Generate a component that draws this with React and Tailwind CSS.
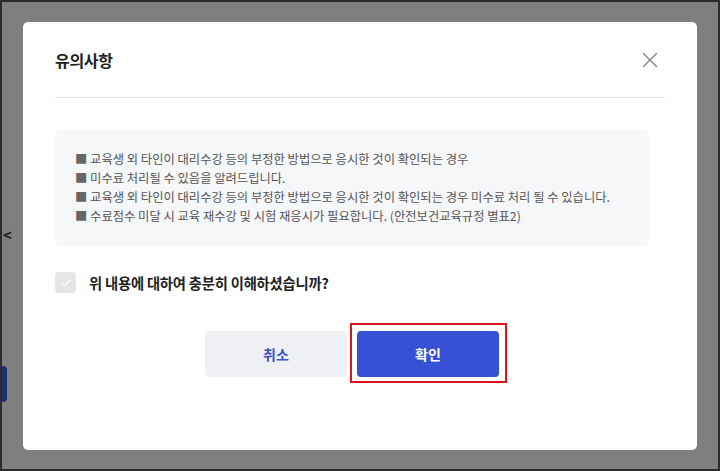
import { X, Check } from 'lucide-react';

const notices = [
    '교육생 외 타인이 대리수강 등의 부정한 방법으로 응시한 것이 확인되는 경우',
    '미수료 처리될 수 있음을 알려드립니다.',
    '교육생 외 타인이 대리수강 등의 부정한 방법으로 응시한 것이 확인되는 경우 미수료 처리 될 수 있습니다.',
    '수료점수 미달 시 교육 재수강 및 시험 재응시가 필요합니다. (안전보건교육규정 별표2)',
];

const App = () => {
    return (
        <div
            className="relative w-[720px] h-[471px] overflow-hidden border-2 border-[#2b2b2b] bg-[#7f7f7f]"
            style={{ fontFamily: '"Noto Sans CJK KR", "Noto Sans", sans-serif' }}
        >
            {/* page behind the dimmed overlay */}
            <span className="absolute left-[1px] top-[222px] text-[15px] font-bold text-[#1f1f1f]">&lt;</span>
            <div className="absolute left-0 top-[364px] w-[5px] h-[36px] rounded-r bg-[#1f2f6e]" />

            <div className="flex justify-center pt-[20px]">
                <div className="w-[674px] h-[428px] rounded-[5px] bg-white pl-[32px] pr-[32px]">
                    <div className="flex items-center justify-between h-[76px] border-b border-[#e3e3e3]">
                        <h2 className="text-[16px] font-bold text-[#222] tracking-[-0.3px]">유의사항</h2>
                        <button type="button" className="mr-[2px] text-[#858585]" aria-label="닫기">
                            <X className="w-[26px] h-[26px]" strokeWidth={1.3} />
                        </button>
                    </div>

                    <div className="pr-[16px]">
                        <div className="mt-[32px] rounded-[4px] bg-[#f6f7f9] px-[20px] py-[20px]">
                            <ul className="text-[12.3px] leading-[19px] text-[#555]">
                                {notices.map((n, i) => (
                                    <li key={i}>
                                        <span className="text-[#666]">■</span> {n}
                                    </li>
                                ))}
                            </ul>
                        </div>

                        <label className="mt-[26px] flex items-center gap-[13px]">
                            <span className="flex items-center justify-center w-[21px] h-[21px] rounded-[4px] bg-[#e4e5e7]">
                                <Check className="w-[14px] h-[14px] text-white" strokeWidth={2} />
                            </span>
                            <span className="text-[14.3px] font-bold text-[#222] tracking-[-0.2px]">
                                위 내용에 대하여 충분히 이해하셨습니까?
                            </span>
                        </label>

                        <div className="mt-[38px] flex justify-center gap-[10px]">
                            <button
                                type="button"
                                className="w-[142px] h-[46px] rounded-[4px] bg-[#eef0f3] text-[14px] font-bold text-[#3b52c8]"
                            >
                                취소
                            </button>
                            <div className="relative">
                                <button
                                    type="button"
                                    className="w-[142px] h-[46px] rounded-[4px] bg-[#3651d4] text-[14px] font-bold text-white"
                                >
                                    확인
                                </button>
                                <div className="absolute -left-[7px] -top-[8px] -right-[8px] -bottom-[6px] border-2 border-[#d8141c]" />
                            </div>
                        </div>
                    </div>
                </div>
            </div>
        </div>
    );
};

export default App;
